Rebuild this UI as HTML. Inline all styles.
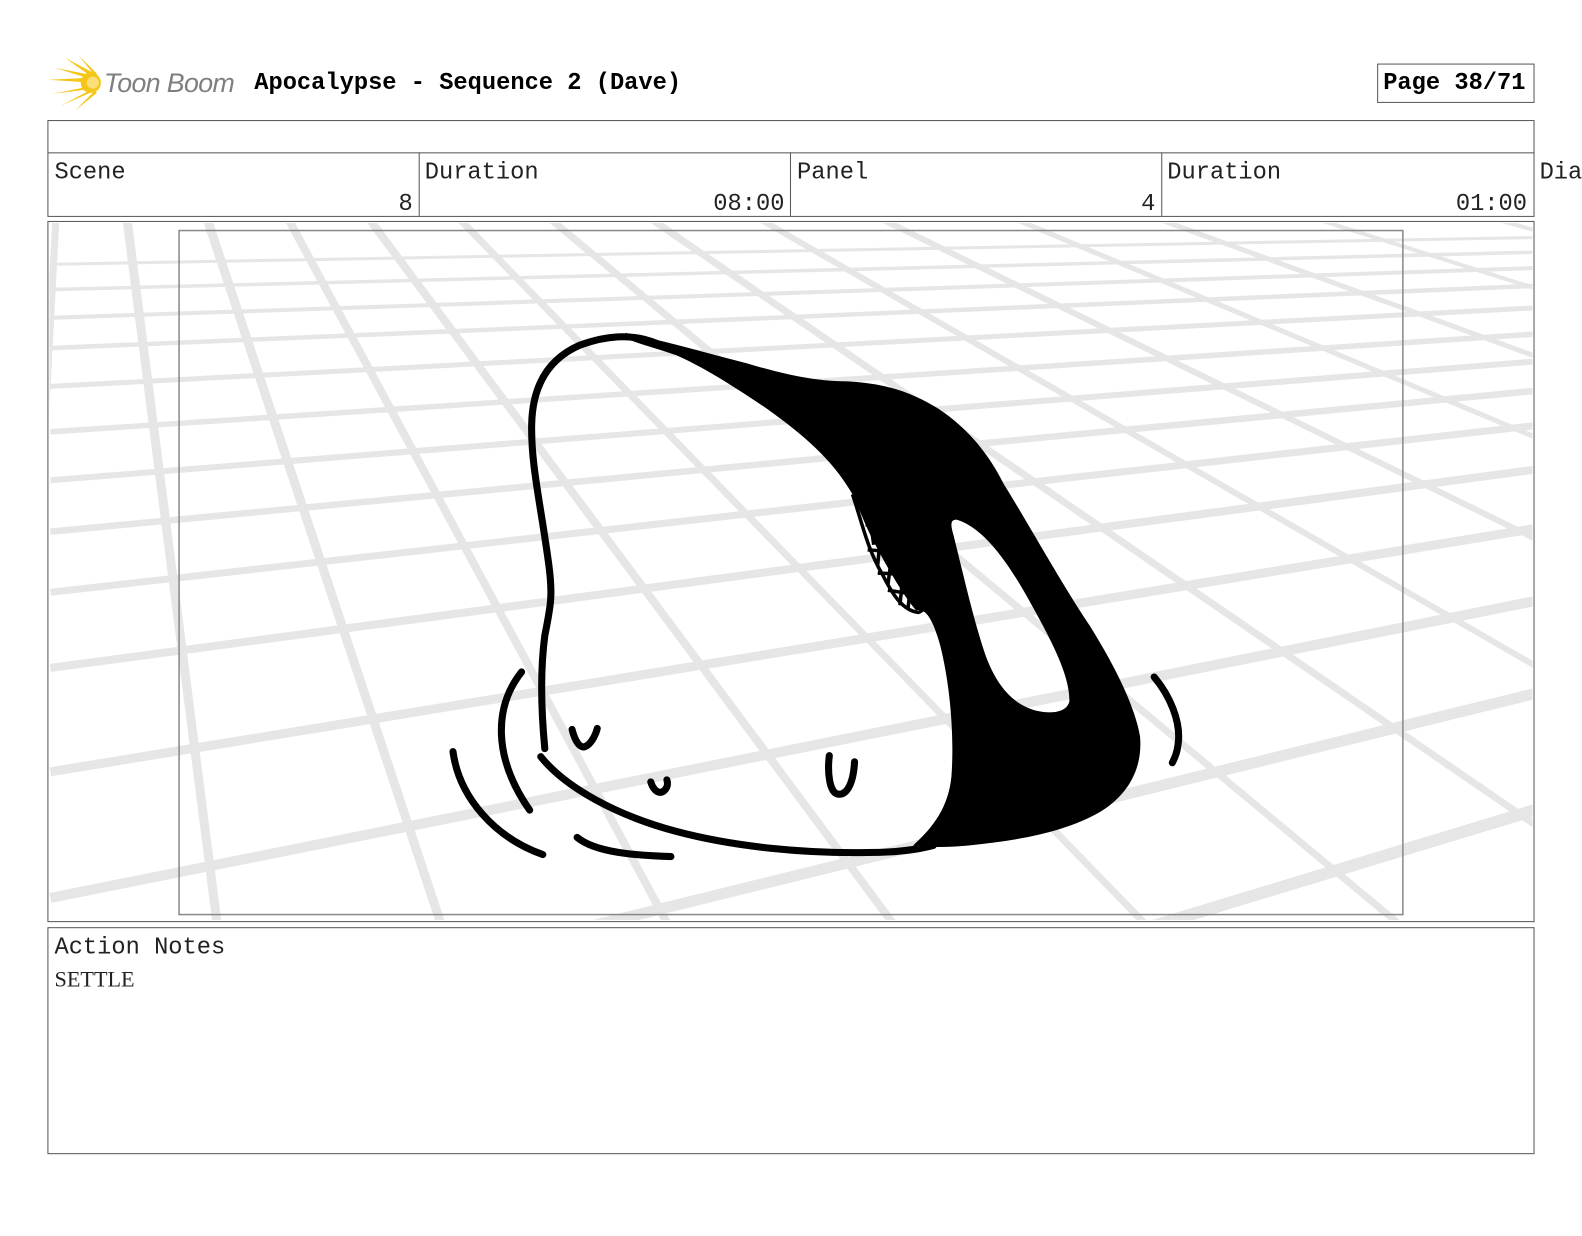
<!DOCTYPE html>
<html><head><meta charset="utf-8"><style>
html,body{margin:0;padding:0;background:#fff;}
body{width:1582px;height:1225px;position:relative;overflow:hidden;font-family:"Liberation Mono",monospace;color:#222;}
#w{position:absolute;left:0;top:0;width:1568px;height:1214px;transform:scale(1.0089);transform-origin:0 0;}
.abs{position:absolute;}
.box{position:absolute;border:1px solid #555;box-sizing:border-box;}
.t{position:absolute;font-size:23.5px;line-height:1;white-space:pre;}
</style></head><body><div id="w">

<svg class="abs" style="left:48px;top:55px" width="56" height="55" viewBox="0 0 56 55">
 <g fill="#f5c518">
  <polygon points="44,27 0,24 44,22"/>
  <polygon points="44,24 6,12 45,20"/>
  <polygon points="44,22 16,2 46,18"/>
  <polygon points="46,20 30,0 48,18"/>
  <polygon points="44,30 4,38 44,33"/>
  <polygon points="44,33 12,50 46,35"/>
  <polygon points="46,35 26,55 48,37"/>
  <circle cx="42" cy="27" r="10"/>
 </g>
 <path d="M44 19 Q52 27 44 36" stroke="#f5c518" stroke-width="3" fill="none"/>
 <circle cx="44" cy="27" r="6" fill="#fbe07a"/>
</svg>
<div class="t" style="left:103px;top:69px;font-family:'Liberation Sans',sans-serif;font-style:italic;font-size:26.5px;color:#7f7f7f;letter-spacing:-0.6px">Toon Boom</div>
<div class="t" style="left:252px;top:71px;font-weight:bold;color:#000">Apocalypse - Sequence 2 (Dave)</div>
<div class="box" style="left:1365px;top:63px;width:156px;height:39px;"></div>
<div class="t" style="left:1371px;top:71px;font-weight:bold;color:#000">Page 38/71</div>

<div class="box" style="left:47px;top:119px;width:1474px;height:96px;"></div>
<div class="abs" style="left:47px;top:151px;width:1474px;height:1px;background:#555"></div>
<div class="abs" style="left:415px;top:151px;width:1px;height:63px;background:#555"></div>
<div class="abs" style="left:783px;top:151px;width:1px;height:63px;background:#555"></div>
<div class="abs" style="left:1151px;top:151px;width:1px;height:63px;background:#555"></div>
<div class="t" style="left:54px;top:160px">Scene</div>
<div class="t" style="left:395px;top:191px">8</div>
<div class="t" style="left:421px;top:160px">Duration</div>
<div class="t" style="left:707px;top:191px">08:00</div>
<div class="t" style="left:790px;top:160px">Panel</div>
<div class="t" style="left:1131px;top:191px">4</div>
<div class="t" style="left:1157px;top:160px">Duration</div>
<div class="t" style="left:1443px;top:191px">01:00</div>
<div class="t" style="left:1526px;top:160px">Dia</div>

<div class="box" style="left:47px;top:219px;width:1474px;height:695px;"></div>
<svg class="abs" style="left:0;top:0" width="1582" height="1225">
 <defs><clipPath id="c"><rect x="49" y="221" width="1470" height="691"/></clipPath></defs>
 <g clip-path="url(#c)" stroke="#e6e6e6" fill="none">
  <g stroke-width="7">
   <line x1="76" y1="-173" x2="14" y2="1000"/>
   <line x1="76" y1="-173" x2="226" y2="1000" stroke-width="9"/>
   <line x1="76" y1="-173" x2="465" y2="1000" stroke-width="9"/>
   <line x1="76" y1="-173" x2="707" y2="1000" stroke-width="8"/>
   <line x1="76" y1="-173" x2="948" y2="1000" stroke-width="8"/>
   <line x1="76" y1="-173" x2="1217" y2="1000"/>
   <line x1="76" y1="-173" x2="1488" y2="1000"/>
   <line x1="76" y1="-173" x2="1788" y2="1000"/>
   <line x1="76" y1="-173" x2="2112" y2="1000" stroke-width="6"/>
   <line x1="76" y1="-173" x2="2475" y2="1000" stroke-width="6"/>
   <line x1="76" y1="-173" x2="2873" y2="1000" stroke-width="5"/>
   <line x1="76" y1="-173" x2="3300" y2="1000" stroke-width="5"/>
   <line x1="76" y1="-173" x2="3772" y2="1000" stroke-width="4"/>
   <line x1="76" y1="-173" x2="4302" y2="1000" stroke-width="4"/>
  </g>
  <line x1="50" y1="262" x2="1600" y2="234" stroke-width="3"/>
  <line x1="50" y1="287" x2="1600" y2="248" stroke-width="3.5"/>
  <line x1="50" y1="315" x2="1600" y2="263" stroke-width="4"/>
  <line x1="50" y1="345" x2="1600" y2="280" stroke-width="4.5"/>
  <line x1="50" y1="383" x2="1600" y2="301" stroke-width="5"/>
  <line x1="50" y1="428" x2="1600" y2="326" stroke-width="5.5"/>
  <line x1="50" y1="476" x2="1600" y2="352" stroke-width="6"/>
  <line x1="50" y1="527" x2="1600" y2="380" stroke-width="6.5"/>
  <line x1="50" y1="587" x2="1600" y2="413" stroke-width="7"/>
  <line x1="50" y1="662" x2="1600" y2="455" stroke-width="8"/>
  <line x1="50" y1="765" x2="1600" y2="511" stroke-width="9"/>
  <line x1="50" y1="890" x2="1600" y2="580" stroke-width="10"/>
  <line x1="50" y1="1050" x2="1600" y2="668" stroke-width="11"/>
  <line x1="50" y1="1250" x2="1600" y2="779" stroke-width="12"/>
 </g>
 <rect x="177.5" y="228.5" width="1213" height="678" fill="none" stroke="#888" stroke-width="1.5"/>

 <g fill="none" stroke="#000" stroke-width="7" stroke-linecap="round" stroke-linejoin="round">
  <path d="M540 742 C536 700 536 660 540 630 C546 600 548 590 544 560 C536 500 526 460 527 420 C528 380 545 355 575 342 C600 333 625 330 650 340"/>
  <path d="M536 750 C560 780 610 808 670 824 C730 840 800 846 860 845 C890 845 910 842 925 838"/>
  <path d="M517 666 C490 700 488 750 525 803"/>
  <path d="M449 745 C455 790 490 830 538 847"/>
  <path d="M572 830 C590 845 630 848 665 849"/>
  <path d="M567 723 C570 735 575 742 580 740 C585 738 590 730 592 722"/>
  <path d="M645 775 C648 785 655 788 659 783 C662 780 662 776 661 773"/>
  <path d="M822 749 C820 765 822 785 830 787 C840 789 846 775 847 755"/>
  <path d="M1144 671 C1160 690 1170 715 1168 735 C1167 745 1165 750 1162 756"/>
 </g>
 <path fill="#000" fill-rule="evenodd" d="M620 330 C660 338 700 350 740 360 C780 372 810 378 840 378 C880 380 905 390 930 405 C960 425 980 450 995 480 C1020 520 1050 575 1080 620 C1105 660 1125 700 1130 730 C1133 765 1115 790 1090 805 C1055 825 1010 833 960 838 C940 840 920 840 905 838 C925 820 940 800 943 770 C946 730 942 680 932 640 C925 615 918 602 908 605 C895 590 878 560 865 535 C855 515 850 500 845 490 C825 455 795 430 760 405 C730 385 700 365 670 352 C650 345 630 340 620 335 Z
 M948 515 C972 522 995 550 1020 595 C1045 640 1060 670 1060 695 C1058 705 1045 708 1030 705 C1005 700 988 680 977 650 C965 615 955 570 945 530 C942 520 942 515 948 515 Z"/>
 <g fill="none" stroke="#000" stroke-width="3.5">
  <path d="M845 490 C855 520 860 545 875 570 C885 590 895 605 910 607 C918 605 918 595 915 585"/>
  <path d="M852 500 L880 510 M858 520 L890 525 M860 545 L900 548 M870 568 L910 570 M880 585 L912 590"/>
  <path d="M860 495 L866 540 M875 505 L870 560 M888 520 L880 580 M898 540 L892 600 M905 560 L900 603"/>
 </g>
</svg>

<div class="box" style="left:47px;top:919px;width:1474px;height:225px;"></div>
<div class="t" style="left:54px;top:928px">Action Notes</div>
<div class="t" style="left:54px;top:960px;font-family:'Liberation Serif',serif;font-size:22px">SETTLE</div>
</div></body></html>
